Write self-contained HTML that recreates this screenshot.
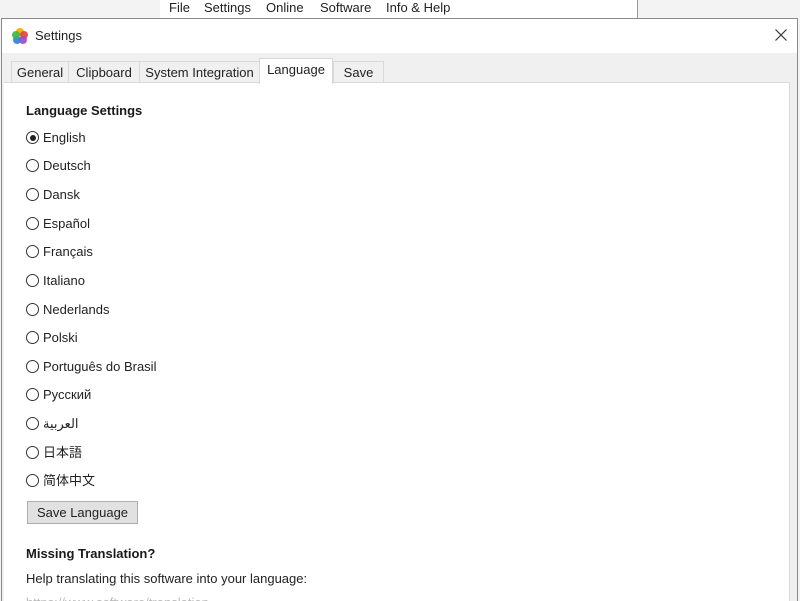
<!DOCTYPE html>
<html><head><style>
body{margin:0;width:800px;height:600px;overflow:hidden;background:#f3f3f3;font-family:"Liberation Sans","Noto Sans CJK JP",sans-serif;position:relative;color:#1a1a1a}
.abs{position:absolute}
.bgwin{left:160px;top:0;width:477px;height:18px;background:#fff;border-right:1px solid #999;}
.menu{top:0;font-size:13px;line-height:15px;color:#222}
.dlg{left:1px;top:18px;width:795px;height:582px;background:#f0f0f0;border:1px solid #8a8a8a;border-bottom:none;overflow:hidden}
.title{left:0;top:0;width:795px;height:34px;background:#fff}
.tab{top:42px;height:21px;background:#f0f0f0;border:1px solid #d9d9d9;border-bottom:none;font-size:13px;line-height:21px;text-align:center;color:#222}
.panel{left:2px;top:63px;width:785px;height:530px;background:#fff;border:1px solid #d9d9d9;border-left:none}
.r{left:24px;font-size:13px;line-height:16px;color:#222}
.r i{display:inline-block;width:11px;height:11px;border:1px solid #333;border-radius:50%;vertical-align:-2px;margin-right:4px;position:relative}
.r i.on::after{content:"";position:absolute;left:2.5px;top:2.5px;width:6px;height:6px;border-radius:50%;background:#222}
</style></head><body>
<div class="abs bgwin"></div>
<div class="abs menu" style="left:169px">File</div>
<div class="abs menu" style="left:204px">Settings</div>
<div class="abs menu" style="left:266px">Online</div>
<div class="abs menu" style="left:320px">Software</div>
<div class="abs menu" style="left:386px">Info &amp; Help</div>
<div class="abs dlg">
 <div class="abs title">
  <svg class="abs" style="left:9px;top:8px" width="18" height="18" viewBox="0 0 18 18">
   <circle cx="9" cy="5" r="4" fill="#f5b400"/><circle cx="13" cy="8" r="4" fill="#e0443b" opacity=".9"/><circle cx="12" cy="13" r="4" fill="#a046c8" opacity=".9"/><circle cx="6" cy="13" r="4" fill="#2f7de1" opacity=".9"/><circle cx="5" cy="8" r="4" fill="#3cb44b" opacity=".9"/>
  </svg>
  <div class="abs" style="left:33px;top:9px;font-size:13px;color:#222">Settings</div>
  <svg class="abs" style="left:773px;top:10px" width="12" height="12" viewBox="0 0 12 12"><path d="M0.5 0.5L11.5 11.5M11.5 0.5L0.5 11.5" stroke="#333" stroke-width="1.2"/></svg>
 </div>
 <div class="abs tab" style="left:9px;width:56px">General</div>
 <div class="abs tab" style="left:66px;width:70px">Clipboard</div>
 <div class="abs tab" style="left:137px;width:119px">System Integration</div>
 <div class="abs tab" style="left:331px;width:49px">Save</div>
 <div class="abs panel"></div>
 <div class="abs tab" style="left:257px;top:39px;width:72px;height:25px;background:#fff;line-height:21px">Language</div>
 <div class="abs" style="left:24px;top:84px;font-size:13px;font-weight:bold">Language Settings</div>
 <div class="abs r" style="top:111px"><i class="on"></i>English</div>
 <div class="abs r" style="top:139px"><i></i>Deutsch</div>
 <div class="abs r" style="top:168px"><i></i>Dansk</div>
 <div class="abs r" style="top:197px"><i></i>Español</div>
 <div class="abs r" style="top:225px"><i></i>Français</div>
 <div class="abs r" style="top:254px"><i></i>Italiano</div>
 <div class="abs r" style="top:283px"><i></i>Nederlands</div>
 <div class="abs r" style="top:311px"><i></i>Polski</div>
 <div class="abs r" style="top:340px"><i></i>Português do Brasil</div>
 <div class="abs r" style="top:368px"><i></i>Русский</div>
 <div class="abs r" style="top:397px"><i></i>العربية</div>
 <div class="abs r" style="top:426px"><i></i>日本語</div>
 <div class="abs r" style="top:454px"><i></i>简体中文</div>
 <div class="abs" style="left:25px;top:482px;width:109px;height:21px;background:#e1e1e1;border:1px solid #adadad;font-size:13px;line-height:21px;text-align:center;color:#222">Save Language</div>
 <div class="abs" style="left:24px;top:527px;font-size:13px;font-weight:bold">Missing Translation?</div>
 <div class="abs" style="left:24px;top:552px;font-size:13px;color:#222">Help translating this software into your language:</div>
 <div class="abs" style="left:24px;top:576px;font-size:13px;color:#bbb">https://www.software/translation</div>
</div>
</body></html>
